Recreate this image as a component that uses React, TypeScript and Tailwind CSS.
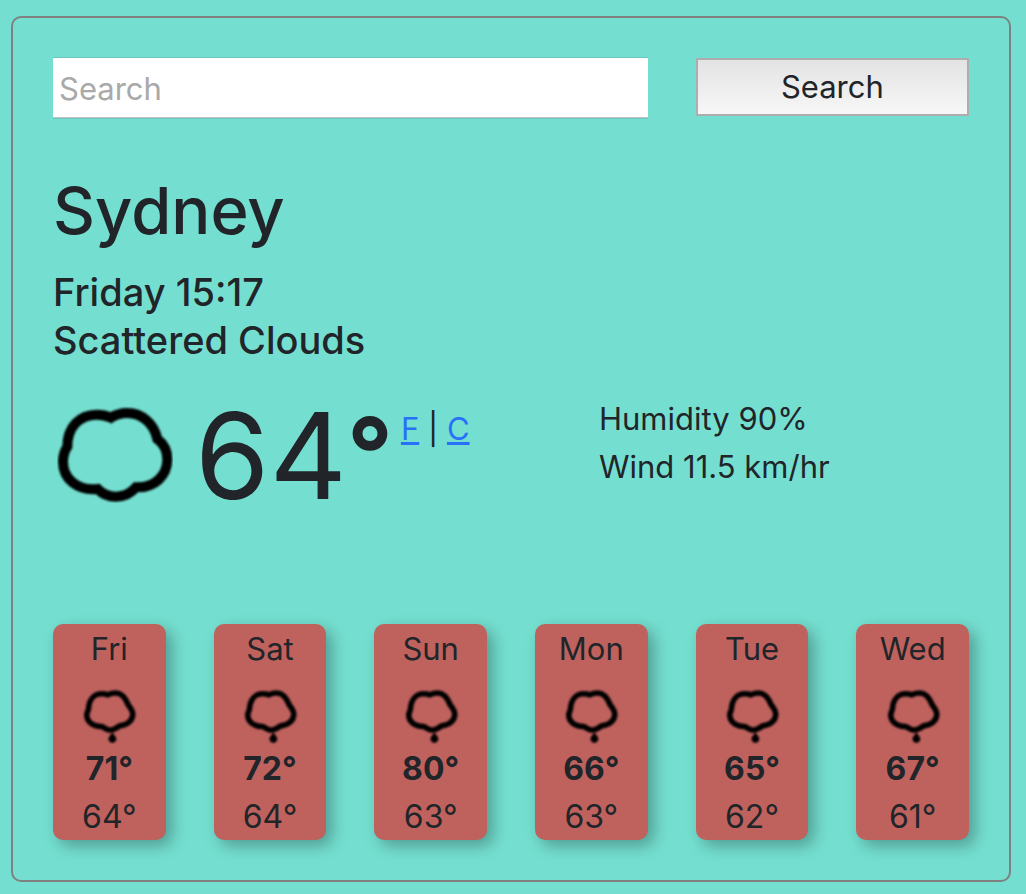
const CLOUD =
  "M82 170C82 110 120 74 170 74C186 74 200 77 213 83C228 73 244 69 262 69C306 69 342 101 352 147C371 161 382 182 382 208C382 257 344 294 288 292C272 311 252 320 228 320C206 320 187 312 173 297C113 303 69 267 69 215C69 200 73 184 82 170Z";

const SMALL_CLOUD =
  "M84 180C88 112 124 77 172 77C188 77 200 78 213 84C228 76 244 72 264 72C304 72 326 96 348 150C370 182 378 190 378 212C378 252 344 284 292 289C272 304 254 317 230 317C208 317 192 306 174 293C114 296 73 262 73 216C73 204 80 196 84 180Z";

function CloudIcon() {
  return (
    <svg viewBox="51 48 348 291" className="h-[97px] w-[116px] shrink-0" role="img" aria-label="Scattered clouds">
      <filter id="soft-large">
        <feGaussianBlur stdDeviation="2.5" />
      </filter>
      <path d={CLOUD} fill="none" stroke="#000" strokeWidth="30" filter="url(#soft-large)" />
    </svg>
  );
}

function DrizzleIcon() {
  return (
    <svg viewBox="-18 -61 477 477" className="size-[72px] shrink-0" role="img" aria-label="Rain">
      <filter id="soft-small">
        <feGaussianBlur stdDeviation="5.5" />
      </filter>
      <g filter="url(#soft-small)">
        <path d={SMALL_CLOUD} fill="none" stroke="#000" strokeWidth="37" strokeLinejoin="round" />
        <path d="M243 330C249 348 269 358 269 377C269 393 257 402 243 402C229 402 217 393 217 377C217 358 237 348 243 330Z" fill="#000" />
      </g>
    </svg>
  );
}

const days = [
  { name: "Fri", high: 71, low: 64 },
  { name: "Sat", high: 72, low: 64 },
  { name: "Sun", high: 80, low: 63 },
  { name: "Mon", high: 66, low: 63 },
  { name: "Tue", high: 65, low: 62 },
  { name: "Wed", high: 67, low: 61 },
];

export default function App() {
  return (
    <div className="min-h-screen bg-[#74dfd0] pt-4 pr-[15px] pb-3 pl-[11px] font-['Inter',sans-serif] text-[31px] leading-[48px] text-[#212529]">
      <main className="rounded-[10px] border-2 border-[#808080] p-10">
        <form className="grid grid-cols-6 items-start gap-12" onSubmit={(e) => e.preventDefault()}>
          <input
            type="search"
            aria-label="Search"
            placeholder="Search"
            className="col-span-4 h-[60px] w-full min-w-0 bg-white px-[6px] shadow-[0_-1px_0_#68c6ba,0_1px_0_#68c6ba,inset_0_-1px_0_#c4c4c4] outline-none placeholder:text-[#a9a9a9]"
          />
          <button
            type="submit"
            className="col-span-2 h-[58px] border-2 border-[#adadad] bg-linear-to-b from-[#e3e3e3] to-[#f7f7f7]"
          >
            Search
          </button>
        </form>

        <h1 className="mt-[52px] text-[65px] leading-[82px] font-medium">Sydney</h1>
        <div className="mt-4 text-[38px] font-medium">
          <h2>Friday 15:17</h2>
          <h2>Scattered Clouds</h2>
        </div>

        <section className="mt-[31px] grid grid-cols-2 gap-12">
          <div className="flex items-start whitespace-nowrap pl-1">
            <div className="pt-[11px]">
              <CloudIcon />
            </div>
            <span className="ml-[22px] text-[120px] leading-[121px]">64</span>
            <span className="text-[100px] leading-[116px] font-bold">°</span>
            <span className="ml-2 pt-[10px]">
              <a href="#fahrenheit" className="text-[#2870fa] underline">F</a>
              {" | "}
              <a href="#celsius" className="text-[#2870fa] underline">C</a>
            </span>
          </div>
          <ul className="pl-16">
            <li>Humidity 90%</li>
            <li>Wind 11.5 km/hr</li>
          </ul>
        </section>

        <section className="mt-[108px] grid grid-cols-6 gap-12">
          {days.map((day) => (
            <article
              key={day.name}
              className="flex h-[216px] flex-col items-center rounded-[10px] bg-[#bf625e] pt-px text-[32px] shadow-[6px_6px_16px_rgba(0,0,0,0.3)]"
            >
              <h3 className="text-[31px]">{day.name}</h3>
              <DrizzleIcon />
              <strong className="font-bold">{day.high}°</strong>
              <span>{day.low}°</span>
            </article>
          ))}
        </section>
      </main>
    </div>
  );
}
